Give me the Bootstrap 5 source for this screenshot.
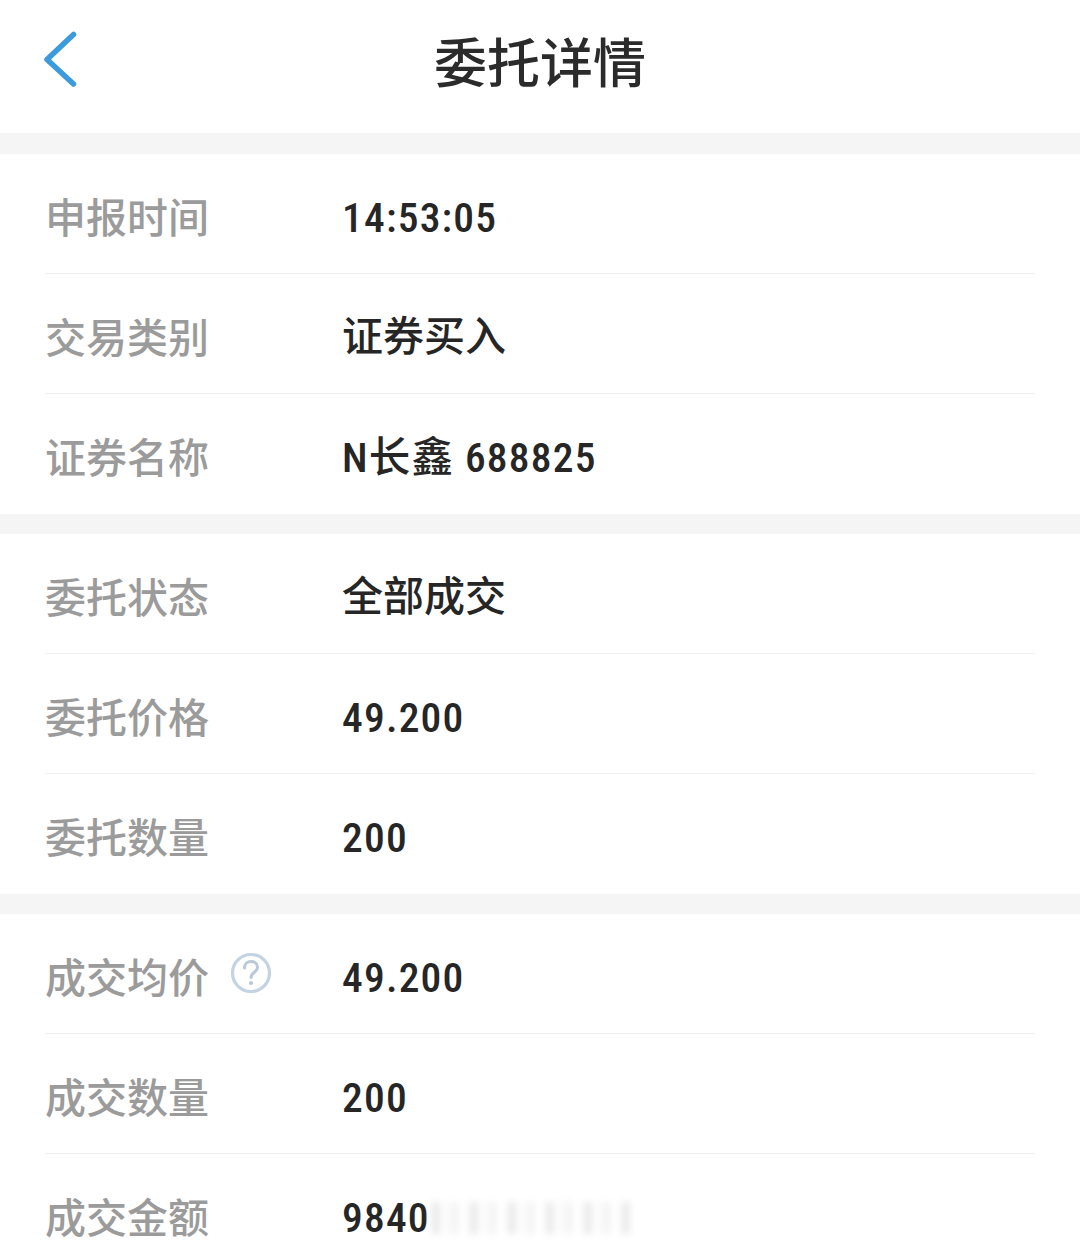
<!DOCTYPE html>
<html lang="zh">
<head>
    <meta charset="utf-8">
    <title>委托详情</title>
    <link href="https://cdn.jsdelivr.net/npm/bootstrap@5.3.0/dist/css/bootstrap.min.css" rel="stylesheet">
    <style>
        html, body { height: 100%; }
        body { background: #fff; overflow: hidden; font-family: "Noto Sans CJK SC", "Noto Sans", sans-serif; }
        .top-bar { height: 133px; }
        .top-title { font-size: 53px; font-weight: 500; color: #2b2b2b; line-height: 1; margin-top: -13px; }
        .back-link { left: 43px; top: 31px; width: 36px; height: 58px; }
        .gap-band { height: 20px; background: #f5f5f5; }
        .gap-first { height: 21px; }
        .info-row { height: 120px; margin: 0 45px; border-bottom: 1px solid #f0f0f0; }
        .info-row:last-child { border-bottom: 0; }
        .info-label { width: 297px; padding-top: 3px; font-size: 41px; font-weight: 500; color: #9b9b9b; line-height: 1; }
        .info-value { padding-top: 8px; font-size: 41px; font-weight: 500; color: #262626; line-height: 1; font-family: "Roboto", "Noto Sans CJK SC", sans-serif; }
        .num-text { font-size: 41.5px; letter-spacing: 1.2px; font-stretch: condensed; }
        .help-icon { width: 42px; height: 42px; margin-left: 21px; margin-top: -4px; }
        .smudge { width: 200px; height: 32px; margin-left: 2px; margin-top: 8px; filter: blur(3.5px);
            background: repeating-linear-gradient(90deg, #e8e8e8 0 7px, #fcfcfc 7px 20px, #f1f1f1 20px 26px, #fff 26px 38px); }
    </style>
</head>
<body>
    <div class="top-bar position-relative d-flex align-items-center justify-content-center">
        <a class="back-link position-absolute d-block" href="#">
            <svg width="36" height="58" viewBox="0 0 36 58" fill="none"><path d="M30.500 3.500 4 28.500 30.500 53" stroke="#3b9bdc" stroke-width="5.500" stroke-linecap="round" stroke-linejoin="round"/></svg>
        </a>
        <div class="top-title">委托详情</div>
    </div>
    <div class="gap-band gap-first"></div>

    <div>
        <div class="info-row d-flex align-items-center"><div class="info-label">申报时间</div><div class="info-value num-text">14:53:05</div></div>
        <div class="info-row d-flex align-items-center"><div class="info-label">交易类别</div><div class="info-value">证券买入</div></div>
        <div class="info-row d-flex align-items-center"><div class="info-label">证券名称</div><div class="info-value num-text">N长鑫 688825</div></div>
    </div>
    <div class="gap-band"></div>

    <div>
        <div class="info-row d-flex align-items-center"><div class="info-label">委托状态</div><div class="info-value">全部成交</div></div>
        <div class="info-row d-flex align-items-center"><div class="info-label">委托价格</div><div class="info-value num-text">49.200</div></div>
        <div class="info-row d-flex align-items-center"><div class="info-label">委托数量</div><div class="info-value num-text">200</div></div>
    </div>
    <div class="gap-band"></div>

    <div>
        <div class="info-row d-flex align-items-center">
            <div class="info-label d-flex align-items-center">成交均价
                <svg class="help-icon" viewBox="0 0 42 42" fill="none">
                    <circle cx="21" cy="21" r="18.500" stroke="#c3d3e2" stroke-width="3.200"/>
                    <path d="M14.500 16c0-4 2.800-6.500 6.600-6.500 3.800 0 6.400 2.400 6.400 5.800 0 5-6.400 5-6.400 10.200" stroke="#b9c9d8" stroke-width="3" stroke-linecap="round"/>
                    <circle cx="21" cy="31" r="2.100" fill="#b9c9d8"/>
                </svg>
            </div>
            <div class="info-value num-text">49.200</div>
        </div>
        <div class="info-row d-flex align-items-center"><div class="info-label">成交数量</div><div class="info-value num-text">200</div></div>
        <div class="info-row d-flex align-items-center"><div class="info-label">成交金额</div><div class="info-value num-text">9840</div><div class="smudge"></div></div>
    </div>
    <script src="https://cdn.jsdelivr.net/npm/bootstrap@5.3.0/dist/js/bootstrap.bundle.min.js"></script>
</body>
</html>
